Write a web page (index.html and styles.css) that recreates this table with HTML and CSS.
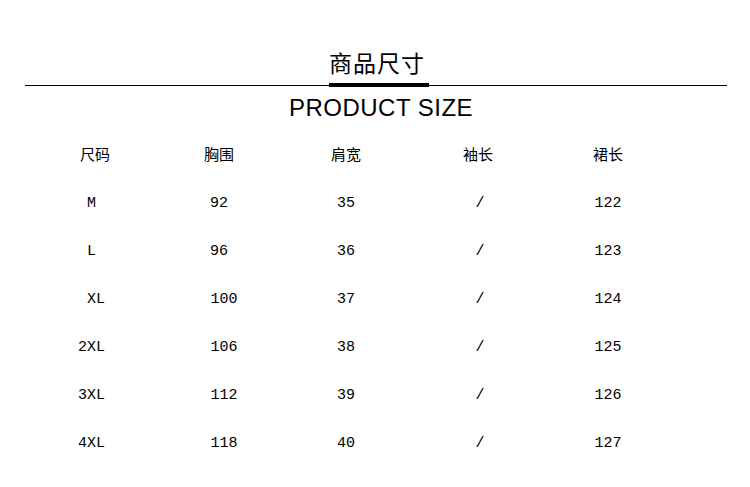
FILE: index.html
```html
<!DOCTYPE html>
<html lang="zh-CN">
<head>
<meta charset="utf-8">
<title>商品尺寸</title>
<link rel="stylesheet" href="styles.css">
</head>
<body>
<div class="page">
  <header class="head">
    <div class="title-wrap"><h1 class="title">商品尺寸</h1></div>
    <div class="rule"></div>
    <h2 class="subtitle">PRODUCT SIZE</h2>
  </header>
  <div class="table">
    <div class="row hdr">
      <span class="c c1">尺码</span><span class="c c2">胸围</span><span class="c c3">肩宽</span><span class="c c4">袖长</span><span class="c c5">裙长</span>
    </div>
    <div class="row">
      <span class="c c1 d1">&nbsp;M</span><span class="c c2">92</span><span class="c c3">35</span><span class="c c4 d4">/</span><span class="c c5">122</span>
    </div>
    <div class="row">
      <span class="c c1 d1">&nbsp;L</span><span class="c c2">96</span><span class="c c3">36</span><span class="c c4 d4">/</span><span class="c c5">123</span>
    </div>
    <div class="row">
      <span class="c c1 d1">&nbsp;XL</span><span class="c c2 d2">100</span><span class="c c3">37</span><span class="c c4 d4">/</span><span class="c c5">124</span>
    </div>
    <div class="row">
      <span class="c c1 d1">2XL</span><span class="c c2 d2">106</span><span class="c c3">38</span><span class="c c4 d4">/</span><span class="c c5">125</span>
    </div>
    <div class="row">
      <span class="c c1 d1">3XL</span><span class="c c2 d2">112</span><span class="c c3">39</span><span class="c c4 d4">/</span><span class="c c5">126</span>
    </div>
    <div class="row">
      <span class="c c1 d1">4XL</span><span class="c c2 d2">118</span><span class="c c3">40</span><span class="c c4 d4">/</span><span class="c c5">127</span>
    </div>
  </div>
</div>
</body>
</html>
```

FILE: styles.css
```css
* { box-sizing: border-box; }
html, body { margin: 0; padding: 0; background: #fff; color: #000; }
body { width: 750px; height: 487px; overflow: hidden; }
.page { padding-top: 50px; }
.head { display: flex; flex-direction: column; align-items: center; }
.title-wrap { width: 100%; display: flex; justify-content: center; padding-left: 8px; }
.title {
  margin: 0;
  width: 100px;
  font-family: "Noto Sans CJK SC", sans-serif;
  font-weight: 400;
  font-size: 23px;
  line-height: 24px;
  letter-spacing: 1px;
  padding-bottom: 9px;
  border-bottom: 4px solid #000;
  white-space: nowrap;
}
.rule {
  align-self: stretch;
  margin: -2px 23px 0 25px;
  height: 1px;
  background: #000;
}
.subtitle {
  margin: 10px 0 0 0;
  font-family: "Liberation Sans", Arial, sans-serif;
  font-weight: 400;
  font-size: 24px;
  line-height: 24px;
  letter-spacing: 0.5px;
  padding-left: 12px;
}
.table { margin-top: 11px; }
.row {
  display: grid;
  grid-template-columns: 30px 130px 118px 136px 128px 132px;
  height: 48px;
  align-items: center;
  font-family: "Liberation Mono", monospace;
  font-size: 15px;
}
.hdr {
  font-family: "Noto Sans CJK SC", sans-serif;
  font-size: 15px;
  padding-bottom: 4px;
}
.c { text-align: center; white-space: pre; }
.c1 { grid-column: 2; }
.c2 { grid-column: 3; }
.c3 { grid-column: 4; }
.c4 { grid-column: 5; }
.c5 { grid-column: 6; }
.d1 { text-align: left; padding-left: 48px; }
.d2 { padding-left: 10px; }
.d4 { padding-left: 4px; }
```
